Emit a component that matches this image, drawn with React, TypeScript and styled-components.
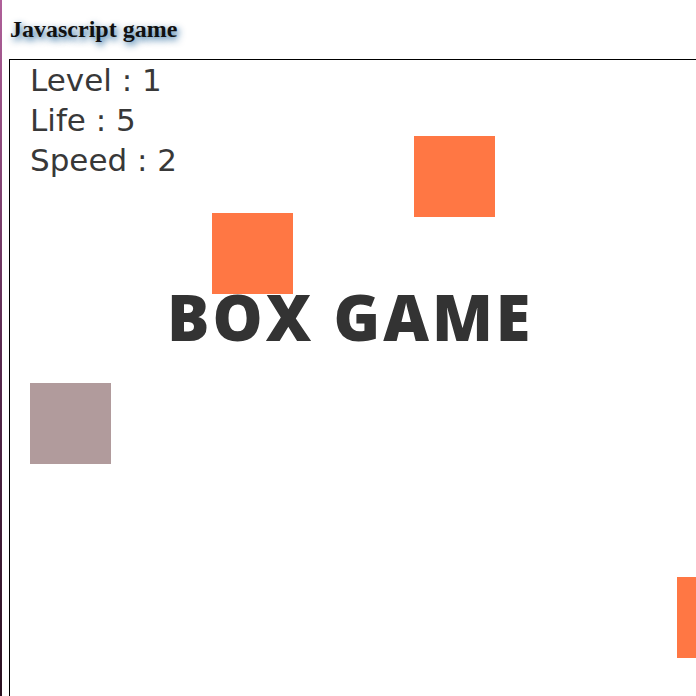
import React from "react";
import styled, { createGlobalStyle } from "styled-components";

const Global = createGlobalStyle`
  html, body { margin: 0; padding: 0; background: #fff; }
  body {
    overflow: hidden;
    border-left: 2px solid transparent;
    border-image: linear-gradient(to bottom, #b0609a, #5a2a50 50%, #2a1020) 1;
  }
`;

const Page = styled.div`
  padding: 15px 0 0 7px;
  width: 696px;
  height: 696px;
  box-sizing: border-box;
  overflow: hidden;
`;

const Title = styled.h1`
  margin: 0 0 16px 1px;
  font-family: "Liberation Serif", "Times New Roman", serif;
  font-weight: bold;
  font-size: 24px;
  line-height: 28px;
  color: #111;
  text-shadow: 2px 3px 7px rgba(0, 80, 140, 0.9);
`;

const Board = styled.div`
  position: relative;
  width: 720px;
  height: 720px;
  border: 1px solid #000;
  box-sizing: border-box;
  padding: 0 0 0 20px;
`;

const Stats = styled.div`
  display: flex;
  flex-direction: column;
  font-family: "DejaVu Sans", Verdana, sans-serif;
  font-size: 31px;
  line-height: 40px;
  color: #383838;
  position: relative;
  z-index: 2;
`;

const Box = styled.div<{ $gray?: boolean }>`
  position: absolute;
  width: 81px;
  height: 81px;
  background: ${(p) => (p.$gray ? "#b19b9c" : "#ff7744")};
`;

const Headline = styled.div`
  position: absolute;
  left: 157px;
  top: 225px;
  font-family: "Open Sans", "DejaVu Sans", sans-serif;
  font-weight: 800;
  font-size: 63px;
  letter-spacing: 3px;
  line-height: 1;
  color: #333;
  z-index: 2;
  white-space: nowrap;
`;

const boxes = [
  { x: 404, y: 76 },
  { x: 202, y: 153 },
  { x: 20, y: 323, gray: true },
  { x: 667, y: 517 },
];

export default function App() {
  return (
    <>
      <Global />
      <Page>
        <Title>Javascript game</Title>
        <Board>
          <Stats>
            <span>Level : 1</span>
            <span>Life : 5</span>
            <span>Speed : 2</span>
          </Stats>
          {boxes.map((b, i) => (
            <Box key={i} $gray={b.gray} style={{ left: b.x, top: b.y }} />
          ))}
          <Headline>BOX GAME</Headline>
        </Board>
      </Page>
    </>
  );
}
